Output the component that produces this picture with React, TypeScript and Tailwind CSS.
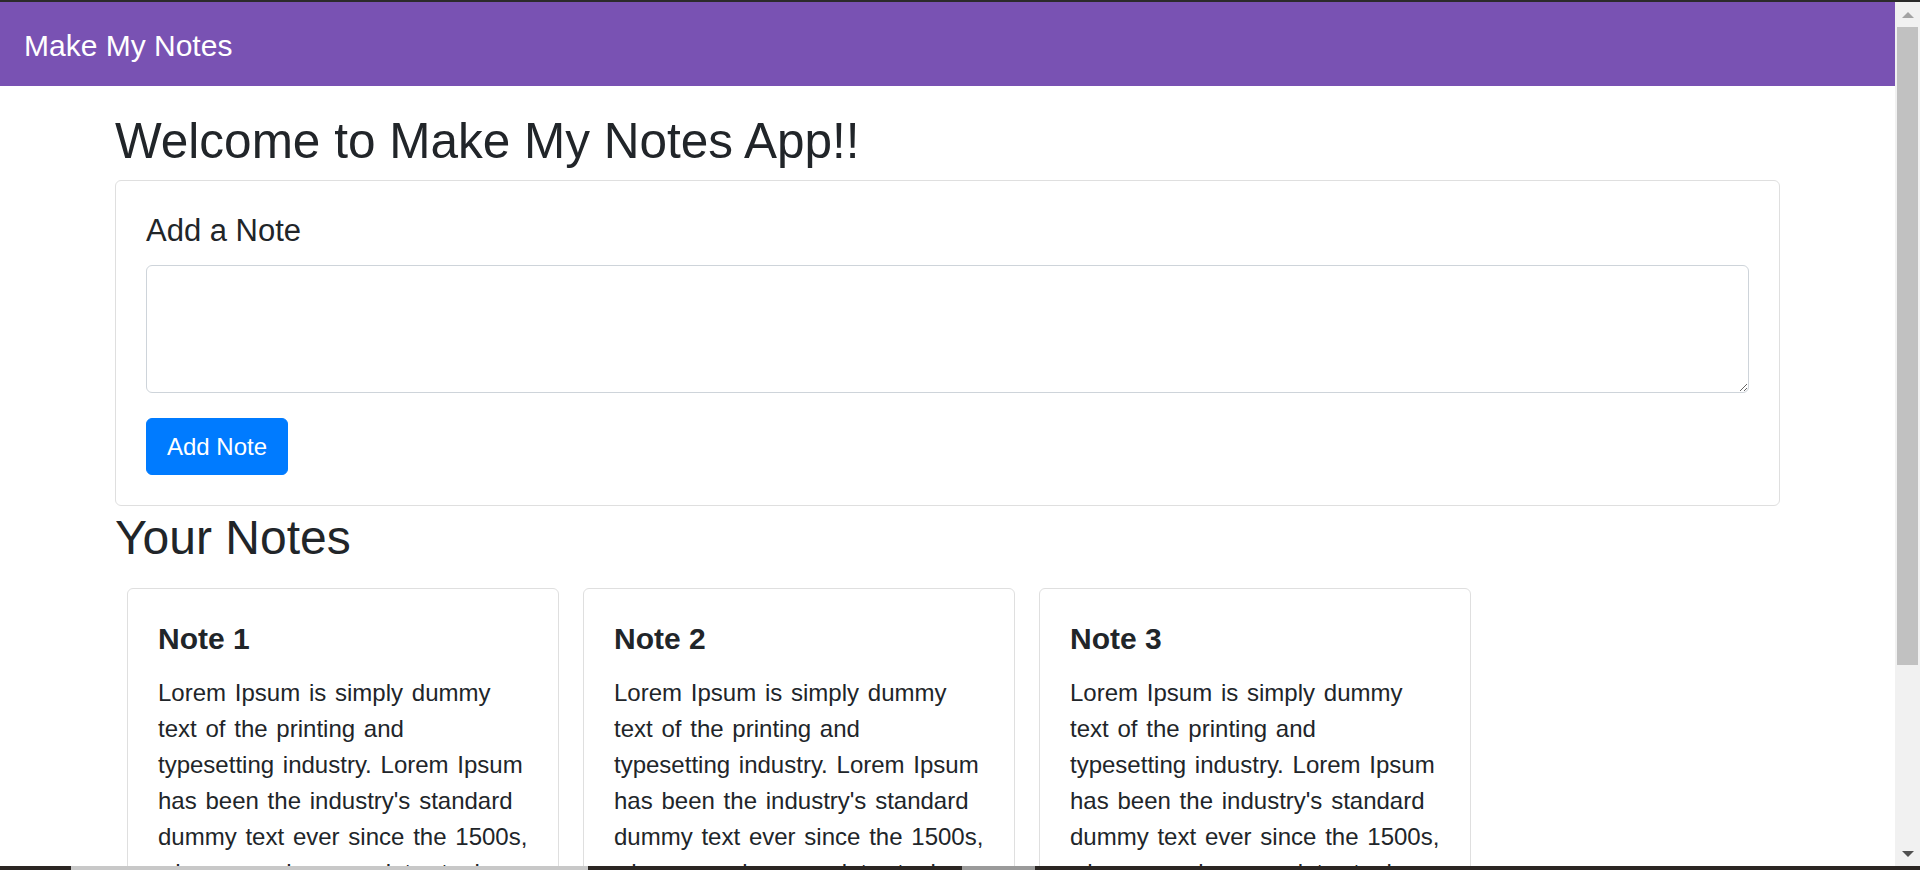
import React from 'react';

const LOREM =
  "Lorem Ipsum is simply dummy text of the printing and typesetting industry. Lorem Ipsum has been the industry's standard dummy text ever since the 1500s, when an unknown printer took a galley of type and scrambled it to make a type specimen book.";

const notes = [
  { id: 1, title: 'Note 1', text: LOREM },
  { id: 2, title: 'Note 2', text: LOREM },
  { id: 3, title: 'Note 3', text: LOREM },
];

const NoteCard: React.FC<{ title: string; text: string }> = ({ title, text }) => (
  <div className="w-[432px] mx-[12px] mt-[12px] border border-[#dfdfdf] rounded-[6px] bg-white shrink-0">
    <div className="p-[30px]">
      <h5 className="text-[30px] leading-[36px] font-bold pt-[2px] mb-[18px]">{title}</h5>
      <p className="text-[24px] leading-[36px] [word-spacing:2.1px]">{text}</p>
    </div>
  </div>
);

const Scrollbar: React.FC = () => (
  <div className="w-[25px] shrink-0 bg-[#f1f1f1] flex flex-col">
    <div className="h-[25px] flex items-center justify-center">
      <div className="w-0 h-0 border-l-[6px] border-r-[6px] border-b-[6px] border-l-transparent border-r-transparent border-b-[#a3a3a3]" />
    </div>
    <div className="h-[638px] mx-[2px] bg-[#c1c1c1]" />
    <div className="flex-1" />
    <div className="h-[25px] flex items-center justify-center">
      <div className="w-0 h-0 border-l-[6px] border-r-[6px] border-t-[6px] border-l-transparent border-r-transparent border-t-[#505050]" />
    </div>
  </div>
);

export default function App() {
  return (
    <div className="h-[870px] w-[1920px] flex flex-col overflow-hidden bg-white text-[#212529] font-['Liberation_Sans',Arial,sans-serif]">
      <div className="h-[2px] bg-[#2b2b2b] shrink-0" />
      <div className="flex flex-1 min-h-0">
        <div className="flex-1 min-w-0 flex flex-col overflow-hidden">
          <nav className="h-[84px] shrink-0 bg-[#7952b3] px-[24px] pt-[3px] flex items-center">
            <span className="text-white text-[30px] leading-[45px]">Make My Notes</span>
          </nav>
          <div className="w-[1710px] mx-auto px-[22.5px]">
            <h2 className="text-[49.5px] leading-[58px] mt-[26px] mb-[10px]">Welcome to Make My Notes App!!</h2>
            <div className="border border-[#dfdfdf] rounded-[6px] bg-white">
              <div className="p-[30px]">
                <h5 className="text-[31px] leading-[36px] pt-[2px] mb-[16px]">Add a Note</h5>
                <textarea
                  rows={3}
                  className="block w-full h-[128px] border border-[#ced4da] rounded-[6px] px-[18px] py-[9px] text-[24px] leading-[36px] outline-none mb-[25px]"
                />
                <button className="h-[57px] px-[20px] bg-[#007bff] border border-[#007bff] rounded-[6px] text-white text-[24px] leading-[36px]">
                  Add Note
                </button>
              </div>
            </div>
            <h2 className="text-[48px] leading-[58px] mt-[3px] mb-[9px]">Your Notes</h2>
            <div className="flex">
              {notes.map((n) => (
                <NoteCard key={n.id} title={n.title} text={n.text} />
              ))}
            </div>
          </div>
        </div>
        <Scrollbar />
      </div>
      <div className="h-[4px] shrink-0 flex bg-[#2b2623]">
        <div className="w-[71px]" />
        <div className="w-[517px] bg-[#c8c8c8]" />
        <div className="w-[374px]" />
        <div className="w-[73px] bg-[#9a9a9a]" />
      </div>
    </div>
  );
}
